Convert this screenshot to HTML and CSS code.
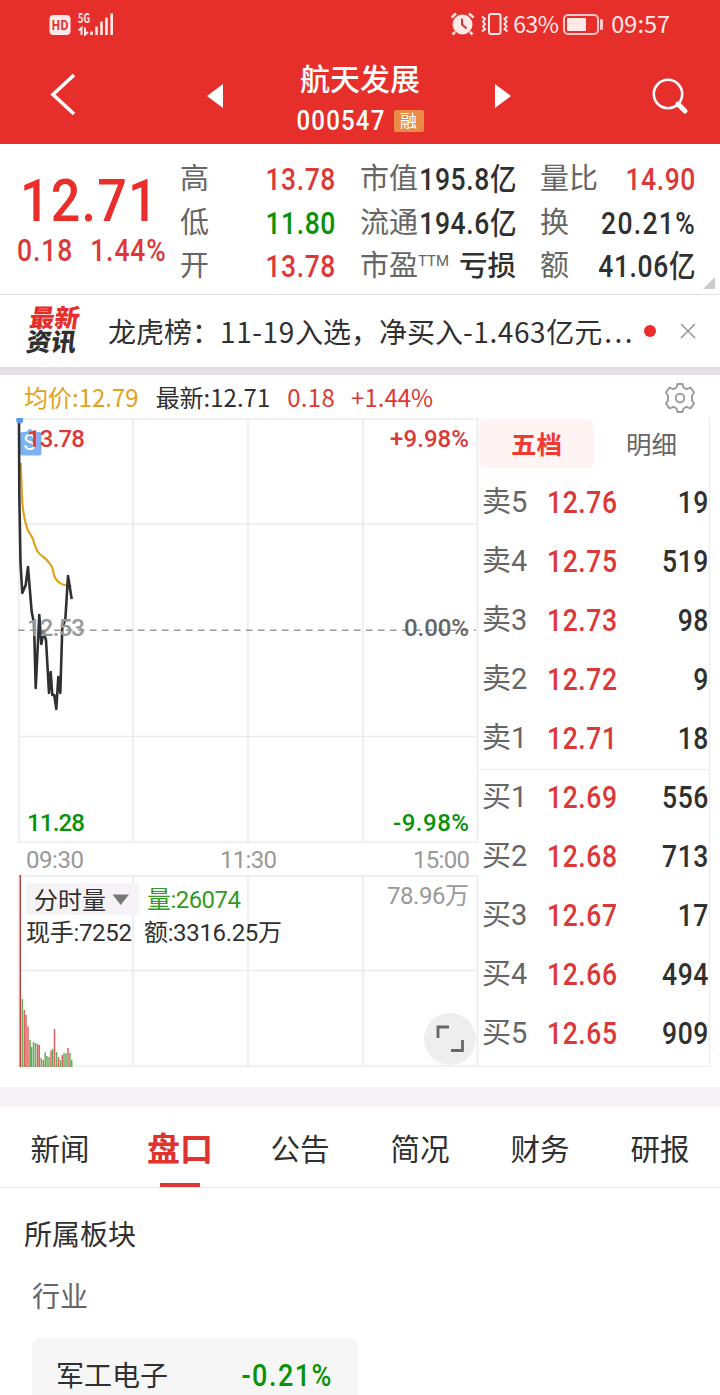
FILE: index.html
```
<!DOCTYPE html>
<html lang="zh-CN">
<head>
    <meta charset="UTF-8">
    <meta name="viewport" content="width=device-width, initial-scale=1.0">
    <title>航天发展 000547</title>
    <link rel="stylesheet" href="styles.css">
</head>
<body>

    <div class="header">
        <div class="status-bar">
            <svg class="status-left" width="66" height="34" viewBox="49 7 66 34">
                <rect x="49.500" y="15" width="21" height="20" rx="4" fill="#ffe9e9"/>
                <text x="51.500" y="30" font-size="13" font-weight="600" textLength="17" lengthAdjust="spacingAndGlyphs" fill="#e62e2b">HD</text>
                <text x="78" y="23" font-size="13" font-weight="700" textLength="12" lengthAdjust="spacingAndGlyphs" fill="#ffe9e9">5G</text>
                <path d="M78.500 30.500L81.500 28V35M85 27.500V34.500L88 32" fill="none" stroke="#ffe9e9" stroke-width="2"/>
                <path d="M91.500 31.500V35M96.500 26.500V35M101.500 21.500V35M106.500 17.500V35M111.700 13.500V35" fill="none" stroke="#ffe9e9" stroke-width="2.600"/>
            </svg>
            <div class="status-right">
                <svg width="60" height="26" viewBox="449 11 60 26" fill="none" stroke="#ffe9e9">
                    <circle cx="462.500" cy="24.500" r="10" fill="#ffe9e9" stroke="none"/>
                    <path d="M451.500 17.500L456 13.500M473.500 17.500L469 13.500M455 32L452.500 34.500M470 32L472.500 34.500" stroke-width="2.500"/>
                    <path d="M462 18.500V24.500L466.500 28.500" stroke="#e62e2b" stroke-width="2"/>
                    <rect x="489" y="14" width="11.500" height="20" rx="2" stroke-width="2"/>
                    <path d="M482 16.500l3 2.500l-2 2.500l2 2.500l-2 2.500l2 2.500l-3 2.500M507.500 16.500l-3 2.500l2 2.500l-2 2.500l2 2.500l-2 2.500l3 2.500" stroke-width="2"/>
                </svg>
                <span class="battery-text">63%</span>
                <svg width="42" height="24" viewBox="561 12 42 24">
                    <rect x="564" y="15" width="34" height="19" rx="4" fill="none" stroke="#ffc9c8" stroke-width="2"/>
                    <rect x="567" y="18" width="19" height="13" rx="1" fill="#ffe9e9"/>
                    <rect x="600" y="19" width="3" height="11" rx="1" fill="#ffc9c8"/>
                </svg>
                <span class="clock">09:57</span>
            </div>
        </div>
        <div class="nav">
            <svg class="back" width="28" height="46" viewBox="0 0 28 46"><path d="M25 2L4 21.500L25 41" fill="none" stroke="#fff" stroke-width="3.600"/></svg>
            <svg class="prev" width="16" height="24" viewBox="0 0 16 24"><path d="M0 12L16 0V24Z" fill="#fff"/></svg>
            <div class="stock">
                <div class="stock-name">航天发展</div>
                <div class="stock-code"><span class="num">000547</span><span class="margin-tag">融</span></div>
            </div>
            <svg class="next" width="16" height="24" viewBox="0 0 16 24"><path d="M16 12L0 0V24Z" fill="#fff"/></svg>
            <svg class="search" width="38" height="38" viewBox="0 0 38 38" fill="none" stroke="#fff">
                <circle cx="17" cy="17" r="14.200" stroke-width="2.600"/>
                <path d="M27 27L34 34" stroke-width="5" stroke-linecap="round"/>
            </svg>
        </div>
    </div>

    <div class="quote">
        <div class="price-box">
            <div class="price num">12.71</div>
            <div class="change"><span class="num">0.18</span><span class="num">1.44%</span></div>
        </div>
        <div class="stats stats-a">
            <div class="stat"><span>高</span><b class="num red">13.78</b></div>
            <div class="stat"><span>低</span><b class="num green">11.80</b></div>
            <div class="stat"><span>开</span><b class="num red">13.78</b></div>
        </div>
        <div class="stats stats-b">
            <div class="stat"><span>市值</span><b class="num">195.8亿</b></div>
            <div class="stat"><span>流通</span><b class="num">194.6亿</b></div>
            <div class="stat"><span>市盈<sup>TTM</sup></span><b class="loss">亏损</b></div>
        </div>
        <div class="stats stats-c">
            <div class="stat"><span>量比</span><b class="num red">14.90</b></div>
            <div class="stat"><span>换</span><b class="num percent">20.21%</b></div>
            <div class="stat"><span>额</span><b class="num">41.06亿</b></div>
        </div>
        <div class="corner"></div>
    </div>

    <div class="news">
        <div class="news-logo"><div class="news-red">最新</div><div>资讯</div></div>
        <div class="news-text">龙虎榜：<span class="digits">11-19</span>入选，净买入<span class="digits">-1.463</span>亿元<span class="dots">...</span></div>
        <div class="news-dot"></div>
        <svg width="16" height="16" viewBox="0 0 16 16"><path d="M1 1L15 15M15 1L1 15" stroke="#999" stroke-width="1.600"/></svg>
    </div>

    <div class="chart-info">
        <span class="avg">均价:12.79</span>
        <span class="last">最新:12.71</span>
        <span class="red diff">0.18</span>
        <span class="red">+1.44%</span>
        <svg class="gear" width="32" height="32" viewBox="0 0 32 32" fill="none" stroke="#999" stroke-width="1.900" stroke-linejoin="round">
            <path d="M13.500 2H18.500L19.500 5.500L22.500 7.200L26.500 5.500L30 10.500L28 13.500V18.500L30 21.500L26.500 26.500L22.500 24.800L19.500 26.500L18.500 30H13.500L12.500 26.500L9.500 24.800L5.500 26.500L2 21.500L4 18.500V13.500L2 10.500L5.500 5.500L9.500 7.200L12.500 5.500Z"/>
            <circle cx="16" cy="16" r="4.300"/>
        </svg>
    </div>

    <div class="market">
        <svg class="chart" width="479" height="650" viewBox="0 418 479 650">
            <!-- grid -->
            <g stroke="#ebebeb" stroke-width="1.600" fill="none">
                <path d="M19 418V843M133 418V843M248 418V843M363 418V843M477.500 418V843M18 419H478M18 524.300H478M18 736.500H478M18 842H478"/>
                <path d="M19 875V1067M133 875V1067M248 875V1067M363 875V1067M477.500 875V1067M18 876H478M18 970.500H478M18 1066H478"/>
            </g>
            <path d="M18 630.300H476" stroke="#999" stroke-width="1.600" stroke-dasharray="6.500 5.500"/>

            <!-- S marker -->
            <rect x="20" y="432" width="21.500" height="23.500" rx="2" fill="#7eb3f3"/>
            <path d="M26 432L30 428.500L34 432Z" fill="#7eb3f3"/>
            <text x="23.500" y="450" font-size="22" fill="#fff" textLength="12" lengthAdjust="spacingAndGlyphs">S</text>

            <!-- average and price lines -->
            <path d="M20.700 463L22 497Q22.600 509 24.300 517Q26 526 28.300 531Q30.500 534.500 33 539Q35.800 549 38 552Q40 555 43.500 557Q47.500 560 50 564Q52.500 567 53 570Q53.500 575 55.300 578Q57 581.500 60 583Q63 585.500 71.500 586" fill="none" stroke="#e2a11c" stroke-width="2.200"/>
            <path d="M19 420L19.300 493L20.500 563L22.300 593L25.700 585L28 567L31.700 612L34 623L35.700 688L39.300 615L41.300 644L43.500 632L46 640L49 693L50.700 672L52.300 695L54.300 695L56.300 709L58.300 677L60.300 693L62.300 627L65.300 620L68 576L71.700 599" fill="none" stroke="#303030" stroke-width="2.600" stroke-linejoin="round"/>
            <circle cx="19.700" cy="420" r="3.500" fill="#5b9ae8"/>

            <!-- volume bars -->
            <path d="M20.300 875V1067" stroke="#c43a3a" stroke-width="1.400"/>
            <path d="M24.300 1010V1067M26 1015V1067M28 1026.500V1067M37.500 1044V1067M39.300 1045V1067M43.300 1060V1067M51 1050.500V1067M54.500 1029V1067M58.500 1057V1067M62.300 1055V1067M68 1048V1067" stroke="#de6161" stroke-width="1.500"/>
            <path d="M22.300 999V1067M30 1040V1067M31.500 1047V1067M33.500 1042V1067M35.500 1043V1067M41.300 1058V1067M45.200 1052.500V1067M47 1056V1067M49 1057V1067M52.700 1049V1067M56.500 1052V1067M60.500 1060V1067M64 1053V1067M66 1053.500V1067M70 1053V1067M71.700 1060V1067" stroke="#63ad5a" stroke-width="1.500"/>

            <g class="axis">
                <text x="27" y="447" textLength="58" fill="#dc3838">13.78</text>
                <text x="390" y="447" textLength="79" fill="#dc3838">+9.98%</text>
                <text x="27" y="636" textLength="58" fill="#999">12.53</text>
                <text x="404" y="636" textLength="65" fill="#666">0.00%</text>
                <text x="27" y="831" textLength="58" fill="#079207">11.28</text>
                <text x="393" y="831" textLength="76" fill="#079207">-9.98%</text>
            </g>
            <g class="axis light">
                <text x="26" y="868" textLength="58">09:30</text>
                <text x="220" y="868" textLength="57">11:30</text>
                <text x="413" y="868" textLength="57">15:00</text>
                <text x="387" y="904" textLength="82">78.96万</text>
            </g>

            <rect x="26" y="883" width="113" height="32" rx="3" fill="#f6f2f6" fill-opacity="0.950"/>
            <path d="M112.500 894.500H129L120.700 905Z" fill="#777"/>
            <g class="axis dark">
                <text x="34" y="909" textLength="72">分时量</text>
                <text x="147" y="908" textLength="94" fill="#329a28">量:26074</text>
                <text x="26" y="941" textLength="106">现手:7252</text>
                <text x="144" y="941" textLength="138">额:3316.25万</text>
            </g>

            <circle cx="450" cy="1039" r="26" fill="#eee"/>
            <path d="M438 1038V1027H449M462.500 1040V1050.500H451" fill="none" stroke="#666" stroke-width="2.800"/>
        </svg>

        <div class="depth">
            <div class="depth-tabs"><div class="depth-tab active">五档</div><div class="depth-tab">明细</div></div>
            <div class="orders sell">
                <div class="order"><span>卖5</span><b class="num red">12.76</b><b class="num qty">19</b></div>
                <div class="order"><span>卖4</span><b class="num red">12.75</b><b class="num qty">519</b></div>
                <div class="order"><span>卖3</span><b class="num red">12.73</b><b class="num qty">98</b></div>
                <div class="order"><span>卖2</span><b class="num red">12.72</b><b class="num qty">9</b></div>
                <div class="order"><span>卖1</span><b class="num red">12.71</b><b class="num qty">18</b></div>
            </div>
            <div class="orders buy">
                <div class="order"><span>买1</span><b class="num red">12.69</b><b class="num qty">556</b></div>
                <div class="order"><span>买2</span><b class="num red">12.68</b><b class="num qty">713</b></div>
                <div class="order"><span>买3</span><b class="num red">12.67</b><b class="num qty">17</b></div>
                <div class="order"><span>买4</span><b class="num red">12.66</b><b class="num qty">494</b></div>
                <div class="order"><span>买5</span><b class="num red">12.65</b><b class="num qty">909</b></div>
            </div>
        </div>
    </div>

    <div class="tabs">
        <div class="tab">新闻</div>
        <div class="tab active">盘口</div>
        <div class="tab">公告</div>
        <div class="tab">简况</div>
        <div class="tab">财务</div>
        <div class="tab">研报</div>
    </div>

    <div class="sector">
        <div class="sector-title">所属板块</div>
        <div class="sector-sub">行业</div>
        <div class="sector-card"><span>军工电子</span><b class="num green">-0.21%</b></div>
    </div>

</body>
</html>
```
FILE: styles.css
```
* {
    box-sizing: border-box;
}
body {
    margin: 0;
    width: 720px;
    height: 1395px;
    overflow: hidden;
    background: #fff;
    color: #303030;
    font-family: Roboto, "Noto Sans CJK SC", sans-serif;
    font-size: 28px;
}
svg {
    display: block;
    flex: none;
}
b {
    font-weight: 500;
}
/* tall narrow figures */
.num {
    display: inline-block;
    font-weight: 500;
    transform: scaleY(1.15);
}
.red {
    color: #dc3838;
}
.green {
    color: #079207;
}

/* header */
.header {
    height: 144px;
    background: #e62e2b;
    color: #fff;
}
.status-bar {
    height: 48px;
    padding: 0 50px 0 49px;
    display: flex;
    align-items: center;
    justify-content: space-between;
    color: #ffe9e9;
    font-family: "Noto Sans CJK SC", sans-serif;
    font-size: 24px;
}
.status-right {
    display: flex;
    align-items: center;
}
.battery-text {
    width: 44px;
    margin: -2px 4px 0;
    font-size: 23px;
    letter-spacing: -0.5px;
}
.clock {
    margin: -2px 0 0 8px;
    font-size: 23.500px;
}
.nav {
    height: 96px;
    padding: 0 31px 0 49px;
    display: flex;
    align-items: center;
}
.prev {
    margin-left: 130px;
}
.stock {
    width: 273px;
    padding-left: 2px;
    text-align: center;
}
.stock-name {
    height: 42px;
    line-height: 42px;
    margin-top: 7px;
    font-size: 30px;
    font-weight: 500;
}
.stock-code {
    height: 40px;
    display: flex;
    align-items: center;
    justify-content: center;
    font-size: 24px;
    letter-spacing: 1.200px;
}
.margin-tag {
    width: 30px;
    height: 22px;
    margin-left: 8px;
    border-radius: 2px;
    background: #e78b45;
    font-size: 17px;
    line-height: 22px;
    letter-spacing: 0;
}
.search {
    margin-left: 140px;
}

/* quote */
.quote {
    position: relative;
    height: 151px;
    padding-top: 12px;
    border-bottom: 1px solid #e3e0e2;
    display: flex;
}
.price-box {
    width: 180px;
    padding-left: 17px;
}
.price {
    margin: 14px 0 0 3px;
    height: 60px;
    line-height: 62px;
    font-size: 52px;
    letter-spacing: 1.200px;
    color: #e92e2b;
}
.change {
    height: 42px;
    line-height: 42px;
    display: flex;
    gap: 17px;
    color: #dc3838;
    font-size: 26.500px;
    letter-spacing: 0.900px;
}
.stats-a {
    width: 156px;
}
.stats-b {
    width: 157px;
    margin-left: 24px;
}
.stats-c {
    width: 156px;
    margin-left: 23px;
}
.stat {
    height: 43.500px;
    line-height: 43.500px;
    display: flex;
    justify-content: space-between;
    white-space: nowrap;
    font-size: 26.500px;
}
.stat .num {
    line-height: 45.500px;
    letter-spacing: 0.600px;
}
.stat .percent {
    letter-spacing: 1.300px;
}
.stat span {
    padding-top: 2px;
    color: #666;
    font-size: 29px;
}
.stat sup {
    font-size: 15px;
    line-height: 0;
    vertical-align: 10px;
}
.loss {
    padding: 2px 1px 0 0;
    font-size: 28.500px;
}
.corner {
    position: absolute;
    right: 5px;
    bottom: 5px;
    border-left: 12px solid transparent;
    border-bottom: 12px solid #ccc;
}

/* news */
.news {
    height: 80px;
    padding: 0 24px 0 28px;
    border-bottom: 8px solid #e6e0e4;
    display: flex;
    align-items: center;
}
.news-logo {
    width: 80px;
    font-size: 25px;
    line-height: 24px;
    font-weight: 900;
    transform: skewX(-8deg);
}
.news-red {
    color: #e62e2b;
}
.news-text {
    width: 528px;
    white-space: nowrap;
    font-size: 28px;
    font-family: "Noto Sans CJK SC", sans-serif;
}
.digits {
    letter-spacing: 0.600px;
}
.dots {
    letter-spacing: 2.500px;
    margin-left: 2px;
}
.news-dot {
    width: 12px;
    height: 12px;
    margin: 0 24px 0 8px;
    flex: none;
    border-radius: 50%;
    background: #ec2b2b;
}

/* chart */
.chart-info {
    height: 43px;
    padding: 0 24px;
    display: flex;
    align-items: center;
    font-family: "Noto Sans CJK SC", sans-serif;
    font-size: 24px;
}
.avg {
    color: #e2a11c;
    margin-right: 17px;
}
.last {
    margin-right: 17px;
}
.diff {
    margin-right: 16px;
    letter-spacing: 0.300px;
}
.gear {
    margin: 2px 0 0 auto;
}
.market {
    display: flex;
    height: 649px;
}
.axis text {
    font-size: 24px;
    font-weight: 500;
}
.axis.light text {
    fill: #999;
    font-weight: 400;
}
.axis.dark {
    fill: #303030;
}
.axis.dark text {
    font-weight: 400;
}
.depth {
    width: 231px;
    border-right: 1px solid #ebebeb;
    border-bottom: 1px solid #ebebeb;
}
.depth-tabs {
    display: flex;
    height: 53px;
}
.depth-tab {
    width: 115px;
    height: 49px;
    margin-top: 1px;
    line-height: 52px;
    border-radius: 6px;
    text-align: center;
    font-size: 25.500px;
    color: #666;
}
.depth-tab.active {
    background: #fff4f4;
    color: #f2392f;
    font-weight: 700;
}
.sell {
    height: 299px;
    border-bottom: 1px solid #ebebeb;
}
.buy {
    margin-top: -4px;
}
.order {
    height: 59px;
    line-height: 62px;
    padding-left: 3px;
    display: flex;
    font-size: 26.500px;
    letter-spacing: 0.600px;
}
.order span {
    width: 65px;
    color: #666;
    font-size: 29px;
    letter-spacing: 0;
}
.qty {
    margin-left: auto;
}

/* tabs */
.tabs {
    display: flex;
    height: 101px;
    margin-top: 20px;
    border-top: 20px solid #f6f2f6;
    border-bottom: 1px solid #e8e8e8;
}
.tab {
    width: 120px;
    height: 80px;
    line-height: 86px;
    text-align: center;
    font-size: 29.500px;
}
.tab.active {
    color: #e0322f;
    font-size: 33px;
    font-weight: 700;
    background: linear-gradient(#dc3838, #dc3838) center bottom / 40px 4px no-repeat;
}

.sector {
    padding: 26px 24px 0;
}
.sector-title {
    height: 44px;
    line-height: 44px;
}
.sector-sub {
    margin: 18px 0 0 8px;
    height: 44px;
    line-height: 44px;
    color: #666;
}
.sector-card {
    width: 326px;
    height: 80px;
    margin: 18px 0 0 8px;
    padding: 0 25px 0 24px;
    border-radius: 8px;
    background: #f6f6f6;
    display: flex;
    justify-content: space-between;
    line-height: 77px;
}
.sector-card .num {
    font-size: 27px;
    line-height: 76px;
    letter-spacing: 1.500px;
}
```
